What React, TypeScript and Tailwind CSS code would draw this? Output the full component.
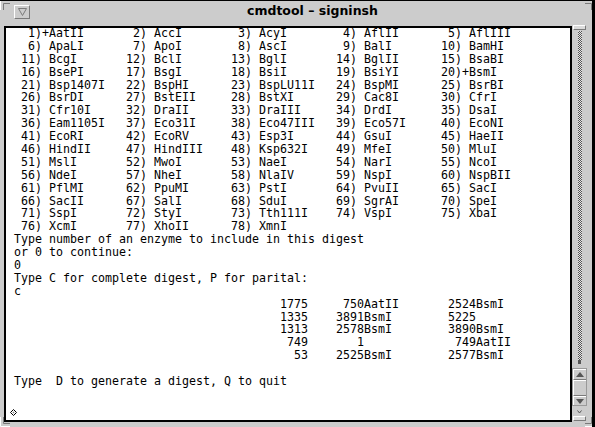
const enzymes = [
  'AatII', 'AccI', 'AcyI', 'AflII', 'AflIII',
  'ApaLI', 'ApoI', 'AscI', 'BalI', 'BamHI',
  'BcgI', 'BclI', 'BglI', 'BglII', 'BsaBI',
  'BsePI', 'BsgI', 'BsiI', 'BsiYI', 'BsmI',
  'Bsp1407I', 'BspHI', 'BspLU11I', 'BspMI', 'BsrBI',
  'BsrDI', 'BstEII', 'BstXI', 'Cac8I', 'CfrI',
  'Cfr10I', 'DraII', 'DraIII', 'DrdI', 'DsaI',
  'Eam1105I', 'Eco31I', 'Eco47III', 'Eco57I', 'EcoNI',
  'EcoRI', 'EcoRV', 'Esp3I', 'GsuI', 'HaeII',
  'HindII', 'HindIII', 'Ksp632I', 'MfeI', 'MluI',
  'MslI', 'MwoI', 'NaeI', 'NarI', 'NcoI',
  'NdeI', 'NheI', 'NlaIV', 'NspI', 'NspBII',
  'PflMI', 'PpuMI', 'PstI', 'PvuII', 'SacI',
  'SacII', 'SalI', 'SduI', 'SgrAI', 'SpeI',
  'SspI', 'StyI', 'Tth111I', 'VspI', 'XbaI',
  'XcmI', 'XhoII', 'XmnI',
];

const picked = new Set([1, 20]);

const digest: [number, number, string, number, string][] = [
  [1775, 750, 'AatII', 2524, 'BsmI'],
  [1335, 3891, 'BsmI', 5225, ''],
  [1313, 2578, 'BsmI', 3890, 'BsmI'],
  [749, 1, '', 749, 'AatII'],
  [53, 2525, 'BsmI', 2577, 'BsmI'],
];

function buildLines() {
  const lines: string[] = [];
  for (let i = 0; i < enzymes.length; i += 5) {
    let line = '';
    for (let j = i; j < Math.min(i + 5, enzymes.length); j++) {
      const n = j + 1;
      line += String(n).padStart(3) + ')' + (picked.has(n) ? '+' : ' ') + enzymes[j].padEnd(10);
    }
    lines.push(line.trimEnd());
  }
  lines.push('Type number of an enzyme to include in this digest');
  lines.push('or 0 to continue:');
  lines.push('0');
  lines.push('Type C for complete digest, P for parital:');
  lines.push('c');
  for (const [a, b, c, d, e] of digest) {
    lines.push(
      String(a).padStart(42) + String(b).padStart(8) + c.padEnd(8) + String(d).padStart(8) + e
    );
  }
  lines.push('');
  lines.push('Type  D to generate a digest, Q to quit');
  return lines;
}

const Corner = ({ flip }: { flip: string }) => (
  <svg width="10" height="10" viewBox="0 0 10 10" className={flip}>
    <path d="M0 10V0H10V3.5H3.5V10Z" fill="#cccccc" />
    <path d="M0.5 10V0.5H10" stroke="#ffffff" fill="none" />
    <path d="M3.5 10V3.5H10" stroke="#7a7a7a" fill="none" />
  </svg>
);

export default function App() {
  const lines = buildLines();

  return (
    <div className="relative w-[595px] h-[427px] overflow-hidden bg-[#cccccc] border-t border-r-[3px] border-black flex flex-col">
      {/* title bar */}
      <div className="h-[25px] flex items-start">
        <div className="mt-[4px] ml-[14px] w-[16px] h-[14px] border border-t-white border-l-white border-b-[#7a7a7a] border-r-[#7a7a7a] flex items-center justify-center">
          <svg width="9" height="8" viewBox="0 0 9 8">
            <path d="M0.5 0.5H8.5L4.5 7.5Z" fill="none" stroke="#7a7a7a" />
          </svg>
        </div>
        <div className="mt-[4px] ml-[217px] font-['DejaVu_Sans',sans-serif] font-bold text-[12.5px] leading-[12.5px] text-black whitespace-pre">
          cmdtool – signinsh
        </div>
      </div>

      {/* body */}
      <div className="flex h-[396px]">
        <div className="ml-[4px] w-[568px] h-[396px] border-2 border-black bg-white pl-[8px] overflow-hidden">
          <div className="-mt-[1px] font-['DejaVu_Sans_Mono',monospace] text-[11.63px] leading-[12.9px] text-black whitespace-pre">
            {lines.map((l, i) => (
              <div key={i} className="h-[12.9px]">{l}</div>
            ))}
          </div>
          <div className="mt-[21px] -ml-[4px]">
            <svg width="7" height="7" viewBox="0 0 7 7">
              <path d="M3.5 0.5L6.5 3.5L3.5 6.5L0.5 3.5Z" fill="none" stroke="#000" />
              <path d="M3.5 2.5L4.5 3.5L3.5 4.5L2.5 3.5Z" fill="#777" />
            </svg>
          </div>
        </div>

        {/* scrollbar */}
        <div className="-mt-[1px] w-[15px] flex flex-col items-center">
          <div className="w-[13px] h-[5px] bg-[#dcdcdc] border border-t-white border-l-white border-b-[#7a7a7a] border-r-[#7a7a7a]" />
          <div className="mt-[1px] w-[4px] h-[329px] bg-[repeating-conic-gradient(#555555_0_25%,#e6e6e6_0_50%)] [background-size:2px_2px]" />
          <div className="w-[3px] h-[4px] bg-[#555555]" />
          <div className="mt-[4px] w-[15px] h-[38px] flex flex-col border border-[#9a9a9a]">
            <div className="h-[11px] flex items-center justify-center border-t border-l border-white border-b border-b-[#7a7a7a]">
              <svg width="8" height="5" viewBox="0 0 8 5">
                <path d="M0 5L4 0L8 5Z" fill="#555555" />
              </svg>
            </div>
            <div className="h-[16px] border-t border-l border-white border-b border-b-[#7a7a7a]" />
            <div className="flex-1 flex items-end justify-center pb-[1px] border-t border-l border-white">
              <svg width="8" height="5" viewBox="0 0 8 5">
                <path d="M0 0L4 5L8 0Z" fill="#555555" />
              </svg>
            </div>
          </div>
          <svg className="mt-[4px]" width="5" height="4" viewBox="0 0 5 4">
            <path d="M0.5 0.5L2.5 3L4.5 0.5" fill="none" stroke="#555555" />
          </svg>
          <div className="mt-[2px] w-[13px] h-[5px] bg-[#dcdcdc] border border-t-white border-l-white border-b-[#7a7a7a] border-r-[#7a7a7a]" />
        </div>
      </div>

      {/* resize corners */}
      <div className="absolute -top-[1px] left-0">
        <Corner flip="" />
      </div>
      <div className="absolute -top-[1px] -right-[3px]">
        <Corner flip="-scale-x-100" />
      </div>
      <div className="absolute bottom-0 left-0">
        <Corner flip="-scale-y-100" />
      </div>
      <div className="absolute bottom-0 -right-[3px]">
        <Corner flip="-scale-x-100 -scale-y-100" />
      </div>
    </div>
  );
}
